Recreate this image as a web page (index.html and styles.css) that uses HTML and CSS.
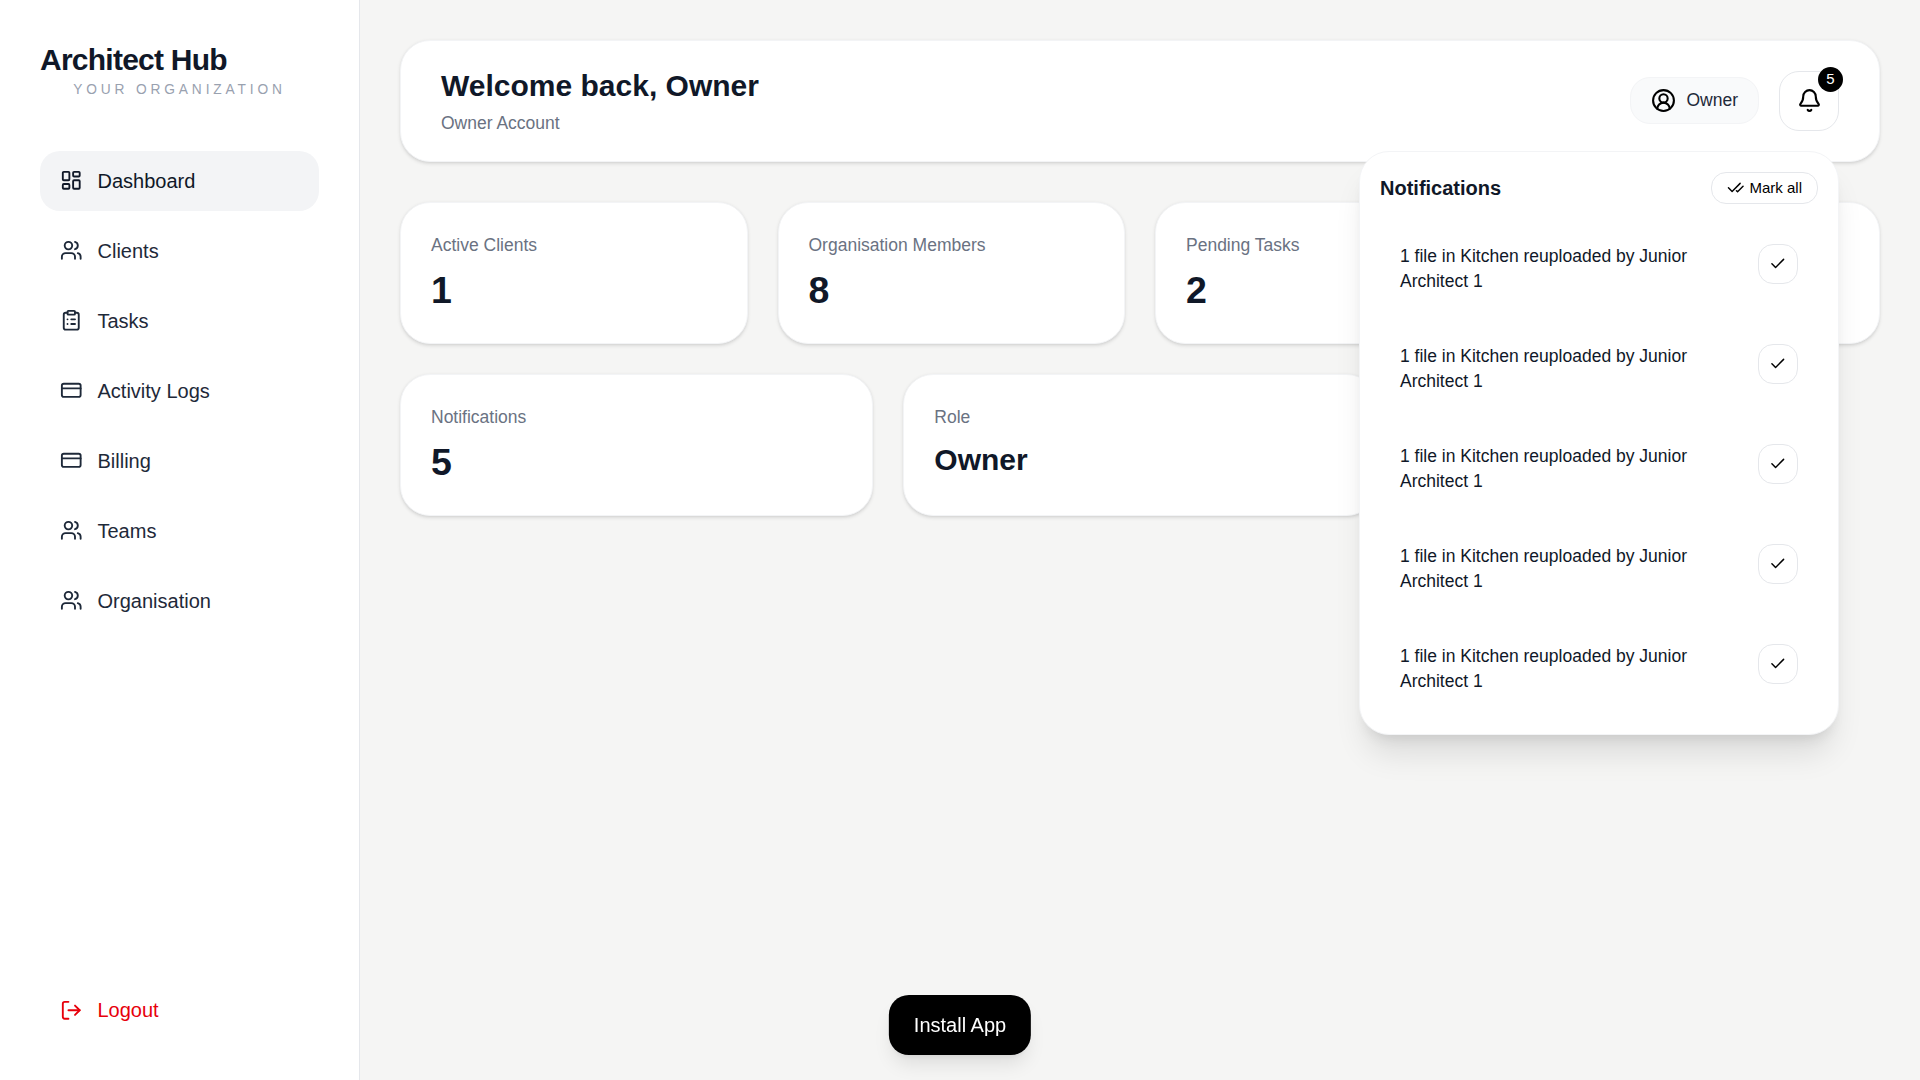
FILE: index.html
```html
<!DOCTYPE html>
<html lang="en">
<head>
    <meta charset="UTF-8">
    <meta name="viewport" content="width=device-width, initial-scale=1.0">
    <title>Architect Hub</title>
    <link rel="stylesheet" href="styles.css">
</head>
<body>
    <!-- shared icons -->
    <svg class="sprite">
        <symbol id="i-dashboard" viewBox="0 0 24 24">
            <rect width="7" height="9" x="3" y="3" rx="1"/>
            <rect width="7" height="5" x="14" y="3" rx="1"/>
            <rect width="7" height="9" x="14" y="12" rx="1"/>
            <rect width="7" height="5" x="3" y="16" rx="1"/>
        </symbol>
        <symbol id="i-users" viewBox="0 0 24 24">
            <path d="M16 21v-2a4 4 0 0 0-4-4H6a4 4 0 0 0-4 4v2"/>
            <path d="M16 3.128a4 4 0 0 1 0 7.744"/>
            <path d="M22 21v-2a4 4 0 0 0-3-3.87"/>
            <circle cx="9" cy="7" r="4"/>
        </symbol>
        <symbol id="i-tasks" viewBox="0 0 24 24">
            <rect width="8" height="4" x="8" y="2" rx="1"/>
            <path d="M16 4h2a2 2 0 0 1 2 2v14a2 2 0 0 1-2 2H6a2 2 0 0 1-2-2V6a2 2 0 0 1 2-2h2"/>
            <path d="M12 11h4M12 16h4M8 11h.01M8 16h.01"/>
        </symbol>
        <symbol id="i-card" viewBox="0 0 24 24">
            <rect width="20" height="14" x="2" y="5" rx="2"/>
            <path d="M2 10h20"/>
        </symbol>
        <symbol id="i-logout" viewBox="0 0 24 24">
            <path d="m16 17 5-5-5-5"/>
            <path d="M21 12H9"/>
            <path d="M9 21H5a2 2 0 0 1-2-2V5a2 2 0 0 1 2-2h4"/>
        </symbol>
        <symbol id="i-user" viewBox="0 0 24 24">
            <path d="M18 20a6 6 0 0 0-12 0"/>
            <circle cx="12" cy="10" r="4"/>
            <circle cx="12" cy="12" r="10"/>
        </symbol>
        <symbol id="i-bell" viewBox="0 0 24 24">
            <path d="M10.268 21a2 2 0 0 0 3.464 0"/>
            <path d="M3.262 15.326A1 1 0 0 0 4 17h16a1 1 0 0 0 .74-1.673C19.41 13.956 18 12.499 18 8A6 6 0 0 0 6 8c0 4.499-1.411 5.956-2.738 7.326"/>
        </symbol>
        <symbol id="i-check" viewBox="0 0 24 24">
            <path d="M20 6 9 17l-5-5"/>
        </symbol>
        <symbol id="i-check-all" viewBox="0 0 24 24">
            <path d="M18 6 7 17l-5-5"/>
            <path d="m22 10-7.5 7.5L13 16"/>
        </symbol>
    </svg>

    <div class="layout">
        <aside class="sidebar">
            <div class="brand">
                <h1>Architect Hub</h1>
                <p>YOUR ORGANIZATION</p>
            </div>
            <nav class="nav">
                <a class="nav-item active"><svg class="icon"><use href="#i-dashboard"/></svg>Dashboard</a>
                <a class="nav-item"><svg class="icon"><use href="#i-users"/></svg>Clients</a>
                <a class="nav-item"><svg class="icon"><use href="#i-tasks"/></svg>Tasks</a>
                <a class="nav-item"><svg class="icon"><use href="#i-card"/></svg>Activity Logs</a>
                <a class="nav-item"><svg class="icon"><use href="#i-card"/></svg>Billing</a>
                <a class="nav-item"><svg class="icon"><use href="#i-users"/></svg>Teams</a>
                <a class="nav-item"><svg class="icon"><use href="#i-users"/></svg>Organisation</a>
            </nav>
            <a class="nav-item logout"><svg class="icon"><use href="#i-logout"/></svg>Logout</a>
        </aside>

        <main class="main">
            <header class="header card">
                <div>
                    <h2>Welcome back, Owner</h2>
                    <p>Owner Account</p>
                </div>
                <div class="header-actions">
                    <div class="user-pill"><svg class="icon icon-lg"><use href="#i-user"/></svg><span>Owner</span></div>
                    <div class="bell-wrap">
                        <button class="bell">
                            <svg class="icon icon-lg"><use href="#i-bell"/></svg>
                            <span class="badge">5</span>
                        </button>

                        <div class="notifications">
                            <div class="notifications-head">
                                <h3>Notifications</h3>
                                <button class="mark-all"><svg class="icon icon-sm"><use href="#i-check-all"/></svg>Mark all</button>
                            </div>
                            <div class="notifications-list">
                                <div class="notification">
                                    <p>1 file in Kitchen reuploaded by Junior Architect 1</p>
                                    <button class="check"><svg class="icon icon-sm"><use href="#i-check"/></svg></button>
                                </div>
                                <div class="notification">
                                    <p>1 file in Kitchen reuploaded by Junior Architect 1</p>
                                    <button class="check"><svg class="icon icon-sm"><use href="#i-check"/></svg></button>
                                </div>
                                <div class="notification">
                                    <p>1 file in Kitchen reuploaded by Junior Architect 1</p>
                                    <button class="check"><svg class="icon icon-sm"><use href="#i-check"/></svg></button>
                                </div>
                                <div class="notification">
                                    <p>1 file in Kitchen reuploaded by Junior Architect 1</p>
                                    <button class="check"><svg class="icon icon-sm"><use href="#i-check"/></svg></button>
                                </div>
                                <div class="notification">
                                    <p>1 file in Kitchen reuploaded by Junior Architect 1</p>
                                    <button class="check"><svg class="icon icon-sm"><use href="#i-check"/></svg></button>
                                </div>
                            </div>
                        </div>
                    </div>
                </div>
            </header>

            <section class="stats stats-4">
                <div class="card stat">
                    <p class="label">Active Clients</p>
                    <p class="value">1</p>
                </div>
                <div class="card stat">
                    <p class="label">Organisation Members</p>
                    <p class="value">8</p>
                </div>
                <div class="card stat">
                    <p class="label">Pending Tasks</p>
                    <p class="value">2</p>
                </div>
                <div class="card stat"></div>
            </section>

            <section class="stats stats-3">
                <div class="card stat">
                    <p class="label">Notifications</p>
                    <p class="value">5</p>
                </div>
                <div class="card stat">
                    <p class="label">Role</p>
                    <p class="value value-text">Owner</p>
                </div>
            </section>
        </main>
    </div>

    <button class="install">Install App</button>
</body>
</html>
```

FILE: styles.css
```css
* {
    box-sizing: border-box;
    margin: 0;
    padding: 0;
}

body {
    font-family: Arial, "Liberation Sans", Helvetica, sans-serif;
    font-size: 20px;
    line-height: 30px;
    background-color: #f5f5f4;
    color: #101828;
}

button {
    font-family: inherit;
    background: #fff;
    color: #000;
    border: 1px solid #e5e7eb;
    cursor: pointer;
}

.sprite {
    display: none;
}

.icon {
    width: 22.5px;
    height: 22.5px;
    flex-shrink: 0;
    fill: none;
    stroke: currentColor;
    stroke-width: 2;
    stroke-linecap: round;
    stroke-linejoin: round;
}

.icon-lg {
    width: 25px;
    height: 25px;
}

.icon-sm {
    width: 17.5px;
    height: 17.5px;
}

.layout {
    display: flex;
    height: 100vh;
}

/* Sidebar */
.sidebar {
    width: 360px;
    flex-shrink: 0;
    display: flex;
    flex-direction: column;
    padding: 40px;
    background-color: #fff;
    border-right: 1px solid #e5e7eb;
}

.brand {
    margin-bottom: 50px;
}

.brand h1 {
    font-size: 30px;
    line-height: 40px;
    letter-spacing: -0.025em;
}

.brand p {
    font-size: 13.75px;
    line-height: 1.5;
    letter-spacing: 0.28em;
    text-align: center;
    color: #99a1af;
}

.nav {
    display: flex;
    flex-direction: column;
    gap: 10px;
}

.nav-item {
    display: flex;
    align-items: center;
    gap: 15px;
    padding: 15px 20px;
    border-radius: 20px;
    color: #1e2939;
}

.nav-item.active {
    background-color: #f3f4f6;
    color: #101828;
}

.nav-item.logout {
    margin-top: auto;
    color: #e7000b;
}

/* Main */
.main {
    flex: 1;
    padding: 40px;
}

.card {
    background-color: #fff;
    border: 1px solid #f3f4f6;
    border-radius: 30px;
    box-shadow: 0 1.25px 3.75px rgba(0,0,0,0.1), 0 1.25px 2.5px -1.25px rgba(0,0,0,0.1);
}

.header {
    display: flex;
    align-items: center;
    justify-content: space-between;
    padding: 25px 40px;
    margin-bottom: 40px;
}

.header h2 {
    font-size: 30px;
    line-height: 40px;
}

.header h2 + p {
    margin-top: 5px;
    font-size: 17.5px;
    line-height: 25px;
    color: #6a7282;
}

.header-actions {
    display: flex;
    align-items: center;
    gap: 20px;
}

.user-pill {
    display: flex;
    align-items: center;
    gap: 10px;
    padding: 10px 20px;
    margin-bottom: 1px;
    background-color: #f9fafb;
    border: 1px solid #f3f4f6;
    border-radius: 20px;
    font-size: 17.5px;
    line-height: 25px;
    color: #1e2939;
}

.user-pill .icon {
    color: #000;
}

.bell-wrap {
    position: relative;
}

.bell {
    position: relative;
    display: flex;
    align-items: center;
    justify-content: center;
    width: 60px;
    height: 60px;
    border-radius: 20px;
}

.bell .icon {
    margin-bottom: 1px;
}

.badge {
    position: absolute;
    top: -5px;
    right: -5px;
    width: 25px;
    height: 25px;
    border-radius: 50%;
    background-color: #000;
    color: #fff;
    font-size: 15px;
    line-height: 24px;
    text-align: center;
}

/* Notifications dropdown */
.notifications {
    position: absolute;
    top: 80px;
    right: 0;
    z-index: 10;
    width: 480px;
    padding: 20px;
    background-color: #fff;
    border: 1px solid #f3f4f6;
    border-radius: 30px;
    box-shadow: 0 25px 31px -6px rgba(0,0,0,0.1), 0 10px 12.5px -7.5px rgba(0,0,0,0.1);
}

.notifications-head {
    display: flex;
    align-items: center;
    justify-content: space-between;
    margin-bottom: 20px;
}

.notifications-head h3 {
    font-size: 20px;
}

.mark-all {
    display: flex;
    align-items: center;
    gap: 5px;
    padding: 5px 15px;
    border-radius: 15px;
    font-size: 15px;
    line-height: 20px;
}

.notifications-list {
    display: flex;
    flex-direction: column;
    gap: 10px;
}

.notification {
    display: flex;
    align-items: flex-start;
    justify-content: space-between;
    gap: 15px;
    padding: 20px;
    font-size: 17.5px;
    line-height: 25px;
}

.check {
    display: flex;
    align-items: center;
    justify-content: center;
    width: 40px;
    height: 40px;
    flex-shrink: 0;
    border-radius: 15px;
}

/* Stats */
.stats {
    display: grid;
    gap: 30px;
    margin-bottom: 30px;
}

.stats-4 {
    grid-template-columns: repeat(4, 1fr);
}

.stats-3 {
    grid-template-columns: repeat(3, 1fr);
}

.stat {
    padding: 30px;
}

.label {
    font-size: 17.5px;
    line-height: 25px;
    color: #6a7282;
}

.value {
    margin-top: 10px;
    font-size: 37.5px;
    line-height: 45px;
    font-weight: bold;
}

.value-text {
    font-size: 30px;
    line-height: 40px;
}

.install {
    position: fixed;
    bottom: 25px;
    left: 50%;
    transform: translateX(-50%);
    padding: 15px 25px;
    border: none;
    border-radius: 20px;
    background-color: #000;
    color: #fff;
    font-size: 20px;
    line-height: 30px;
    box-shadow: 0 12.5px 19px -4px rgba(0,0,0,0.1), 0 5px 7.5px -5px rgba(0,0,0,0.1);
}
```
